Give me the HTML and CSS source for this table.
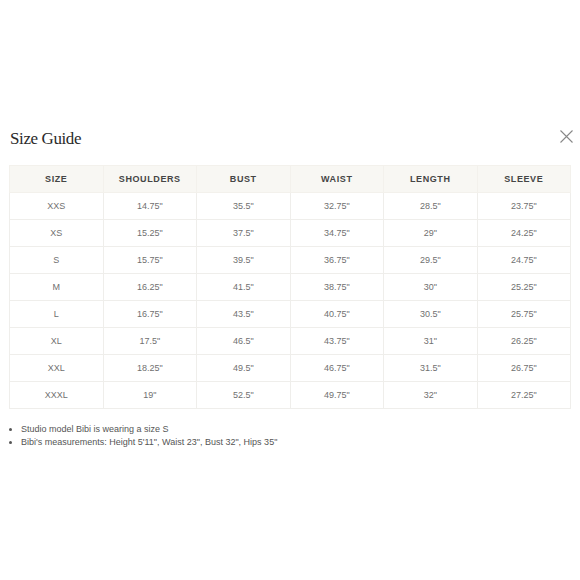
FILE: index.html
```html
<!DOCTYPE html>
<html>
<head>
<meta charset="utf-8">
<link rel="stylesheet" href="styles.css">
</head>
<body>
<div class="modal">
  <div class="head">
    <h1 class="title">Size Guide</h1>
    <svg class="close" width="13" height="13" viewBox="0 0 13 13"><path d="M0.5 0.5L12.5 12.5M12.5 0.5L0.5 12.5" stroke="#888" stroke-width="1.1" fill="none"/></svg>
  </div>
  <table class="grid">
    <thead>
      <tr><th>SIZE</th><th>SHOULDERS</th><th>BUST</th><th>WAIST</th><th>LENGTH</th><th>SLEEVE</th></tr>
    </thead>
    <tbody>
      <tr><td>XXS</td><td>14.75"</td><td>35.5"</td><td>32.75"</td><td>28.5"</td><td>23.75"</td></tr>
      <tr><td>XS</td><td>15.25"</td><td>37.5"</td><td>34.75"</td><td>29"</td><td>24.25"</td></tr>
      <tr><td>S</td><td>15.75"</td><td>39.5"</td><td>36.75"</td><td>29.5"</td><td>24.75"</td></tr>
      <tr><td>M</td><td>16.25"</td><td>41.5"</td><td>38.75"</td><td>30"</td><td>25.25"</td></tr>
      <tr><td>L</td><td>16.75"</td><td>43.5"</td><td>40.75"</td><td>30.5"</td><td>25.75"</td></tr>
      <tr><td>XL</td><td>17.5"</td><td>46.5"</td><td>43.75"</td><td>31"</td><td>26.25"</td></tr>
      <tr><td>XXL</td><td>18.25"</td><td>49.5"</td><td>46.75"</td><td>31.5"</td><td>26.75"</td></tr>
      <tr><td>XXXL</td><td>19"</td><td>52.5"</td><td>49.75"</td><td>32"</td><td>27.25"</td></tr>
    </tbody>
  </table>
  <ul class="notes">
    <li>Studio model Bibi is wearing a size S</li>
    <li>Bibi's measurements: Height 5'11", Waist 23", Bust 32", Hips 35"</li>
  </ul>
</div>
</body>
</html>
```
FILE: styles.css
```css
html, body { margin: 0; padding: 0; background: #fff; }
.modal { padding: 124px 9px 0 9px; font-family: "Liberation Sans", Arial, sans-serif; }
.head { display: flex; justify-content: space-between; align-items: flex-start; height: 41px; }
.title { margin: 5px 0 0 1px; font-family: "Liberation Serif", "DejaVu Serif", serif; font-weight: normal; font-size: 17px; color: #2a2a2a; letter-spacing: -0.4px; }
.close { margin: 6px -2px 0 0; }
.grid { width: 562px; border-collapse: collapse; table-layout: fixed; }
.grid th { background: #f8f7f3; height: 26px; font-size: 9px; font-weight: bold; letter-spacing: 0.6px; color: #454545; text-align: center; padding: 0; border: 1px solid #f3f1ec; }
.grid td { height: 26px; font-size: 9px; color: #707070; text-align: center; padding: 0; border: 1px solid #efeeeb; }
.notes { margin: 14px 0 0 0; padding: 0 0 0 12px; font-size: 9px; color: #555; line-height: 13px; }
.notes li { padding-left: 0; }
```
